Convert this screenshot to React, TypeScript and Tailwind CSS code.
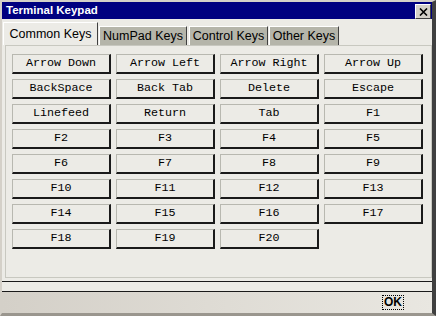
const KEYS = [
  "Arrow Down", "Arrow Left", "Arrow Right", "Arrow Up",
  "BackSpace", "Back Tab", "Delete", "Escape",
  "Linefeed", "Return", "Tab", "F1",
  "F2", "F3", "F4", "F5",
  "F6", "F7", "F8", "F9",
  "F10", "F11", "F12", "F13",
  "F14", "F15", "F16", "F17",
  "F18", "F19", "F20",
];

const TABS = [
  { label: "NumPad Keys", width: "w-[88px]", ml: "ml-px" },
  { label: "Control Keys", width: "w-[79px]", ml: "ml-[2px]" },
  { label: "Other Keys", width: "w-[70px]", ml: "ml-px" },
];

function KeyButton({ label }: { label: string }) {
  return (
    <button className="h-[20px] w-[99px] border-t border-l border-[#b8b8b0] border-r-2 border-b-2 border-r-[#1a1a1a] border-b-[#1a1a1a] bg-[#ecebe6] font-['Liberation_Mono',monospace] text-[11.7px] leading-none text-black">
      {label}
    </button>
  );
}

export default function App() {
  return (
    <div className="flex h-[316px] w-[436px] flex-col border-t-2 border-l-2 border-[#d4d0c8] border-r-[4px] border-r-[#404040] border-b-[3px] border-b-[#9a968e] bg-[#ecebe6] font-['Liberation_Sans',Arial,sans-serif]">
      {/* title bar */}
      <div className="flex h-[17px] shrink-0 justify-between bg-[#000080] pl-[4px] pr-px">
        <span className="self-center text-[11.5px] font-bold leading-none text-white">
          Terminal Keypad
        </span>
        <button className="flex h-[15px] w-[16px] items-center justify-center self-end border-t border-l border-white border-r border-b border-r-[#404040] border-b-[#404040] bg-[#d4d0c8]">
          <svg width="9" height="8" viewBox="0 0 9 8">
            <path d="M1 0.5 L8 7.5 M8 0.5 L1 7.5" stroke="black" strokeWidth="1.6" />
          </svg>
        </button>
      </div>

      {/* tabs */}
      <div className="mt-[3px] flex h-[23px] shrink-0 items-end pl-px text-[12.5px] text-black">
        <div className="flex h-[23px] w-[95px] items-center justify-center border-t border-l border-white border-r border-r-[#404040] bg-[#ecebe6]">
          Common Keys
        </div>
        {TABS.map((t) => (
          <div
            key={t.label}
            className={`${t.width} ${t.ml} flex h-[19px] items-center justify-center border-t border-l border-white border-r border-r-[#404040] bg-[#b5b5aa] pt-px`}
          >
            {t.label}
          </div>
        ))}
      </div>

      {/* panel */}
      <div className="ml-[3px] flex h-[233px] shrink-0 flex-col border-t border-l border-[#c8c8c0] border-r border-b border-r-[#c8c8c0] border-b-[#c8c8c0] pt-[3px]">
        <div className="grid grid-cols-[99px_99px_99px_99px] gap-[5px] pl-[6px] pt-[5px]">
          {KEYS.map((k) => (
            <KeyButton key={k} label={k} />
          ))}
        </div>
      </div>

      <div className="mt-[3px] h-px shrink-0 bg-[#1a1a1a]" />
      <div className="h-[9px] shrink-0" />
      <div className="h-px shrink-0 bg-[#1a1a1a]" />

      {/* footer */}
      <div className="flex h-[21px] shrink-0 items-center justify-end bg-gradient-to-r from-[#d4d0c8] to-[#e9e7e1] pr-[28px]">
        <span className="border border-dotted border-black px-[1px] text-[12px] font-bold leading-[13px] text-black">
          OK
        </span>
      </div>
    </div>
  );
}
